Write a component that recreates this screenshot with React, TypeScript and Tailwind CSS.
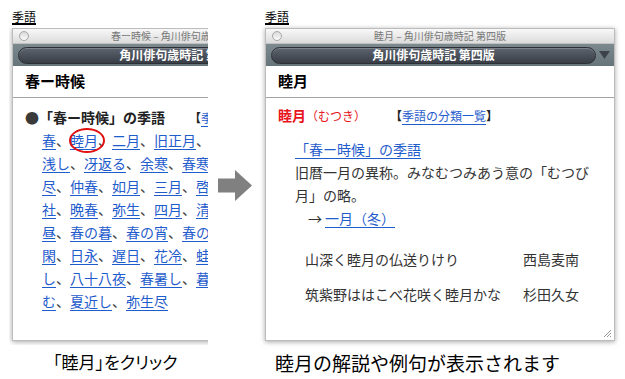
import type { ReactNode } from "react";

const kigoLines = [
  "春、睦月、二月、旧正月、立春、早春、春",
  "浅し、冴返る、余寒、春寒、遅春、二月",
  "尽、仲春、如月、三月、啓蟄、彼岸、春",
  "社、晩春、弥生、四月、清明、春日、春",
  "昼、春の暮、春の宵、春の夜、暖か、長",
  "閑、日永、遅日、花冷、蛙の目借時、遅",
  "し、八十八夜、春暑し、暮の春、春惜し",
  "む、夏近し、弥生尽",
];

const reigaku = [
  { ku: "山深く睦月の仏送りけり", author: "西島麦南" },
  { ku: "筑紫野ははこべ花咲く睦月かな", author: "杉田久女" },
];

const linkCls = "text-[#1f5ccc] underline decoration-1 underline-offset-[3px]";

const MacWindow = ({ title, header, children }: { title: string; header: string; children: ReactNode }) => {
  return (
    <div className="w-[350px] h-[313px] flex flex-col bg-white border border-[#bcbcbc] shadow-[0_1px_5px_rgba(0,0,0,0.35)]">
      {/* title bar */}
      <div className="h-[15px] flex items-center border-b border-[#c2c2c2] bg-gradient-to-b from-[#f8f8f8] to-[#dcdcdc]">
        <span className="ml-[6px] w-[10px] h-[10px] rounded-full border border-[#a8a8a8] bg-gradient-to-b from-[#d9d9d9] to-[#fbfbfb]" />
        <span className="flex-1 text-center text-[10px] leading-none text-[#777]">{title}</span>
        <span className="w-[16px]" />
      </div>
      {/* toolbar */}
      <div className="h-[22px] flex items-center gap-[3px] pl-[5px] pr-[4px] bg-gradient-to-b from-[#7c898e] to-[#66757a]">
        <div className="flex-1 h-[17px] rounded-full border border-[#2c3036] bg-gradient-to-b from-[#5d646e] to-[#393e47] shadow-[inset_0_1px_0_rgba(255,255,255,0.2)] flex items-center justify-center">
          <span className="text-[12px] leading-none font-bold text-white">角川俳句歳時記 第四版</span>
        </div>
        <svg width="11" height="8" viewBox="0 0 11 8">
          <polygon points="0,0 11,0 5.5,8" fill="#3e4349" />
        </svg>
      </div>
      {/* header */}
      <div className="h-[32px] flex items-center px-[12px] border-b border-[#a3a3a3] text-[15px] font-bold text-black">
        {header}
      </div>
      <div className="flex-1 flex flex-col">{children}</div>
    </div>
  );
};

const KigoLine = ({ line, row }: { line: string; row: number }) => {
  const parts = line.split("、");
  return (
    <div className="whitespace-nowrap">
      {parts.map((p, i) => (
        <span key={i}>
          {row === 0 && p === "睦月" ? (
            <span className="relative">
              <span className={linkCls}>{p}</span>
              <span className="absolute left-[-1px] top-[-2px] w-[36px] h-[25px] rounded-[50%] border-[2.5px] border-[#e01010]" />
            </span>
          ) : (
            <span className={linkCls}>{p}</span>
          )}
          {i < parts.length - 1 && <span className="text-[#444]">、</span>}
        </span>
      ))}
    </div>
  );
};

const KigoLabel = () => (
  <div className="h-[28px] pt-[10px] flex items-start">
    <span className="text-[12px] leading-[13px] text-black border-b-2 border-black">季語</span>
  </div>
);

export default function App() {
  return (
    <div className="w-[625px] h-[379px] bg-white overflow-hidden flex font-['Noto_Sans_CJK_JP','Noto_Sans',sans-serif] text-[#333]">
      {/* left: before click */}
      <div className="w-[208px] pl-[9px] flex flex-col">
        <div className="pl-[3px]">
          <KigoLabel />
        </div>
        <div className="w-[199px] pl-[3px] pb-[4px] overflow-hidden">
          <MacWindow title="春ー時候 – 角川俳句歳時記 第四版" header="春ー時候">
            <div className="pl-[12px] pt-[8px] text-[14px] leading-[23px]">
              <div className="flex whitespace-nowrap">
                <span className="text-[#3a3a3a]">●</span>
                <span className="font-bold text-[#222]">「春ー時候」の季語</span>
                <span className="ml-[24px] text-[12px]">
                  <span className="font-bold text-[#222]">【</span>
                  <span className={linkCls}>季語の分類一覧</span>】
                </span>
              </div>
              <div className="pl-[17px]">
                {kigoLines.map((l, i) => (
                  <KigoLine key={i} line={l} row={i} />
                ))}
              </div>
            </div>
          </MacWindow>
        </div>
        <div className="mt-[7px] ml-[44px] text-[17px] leading-[20px] text-black [font-feature-settings:'palt']">
          「睦月」をクリック
        </div>
      </div>

      {/* arrow */}
      <div className="w-[57px] pt-[170px] pl-[10px]">
        <svg width="34" height="31" viewBox="0 0 34 31">
          <polygon points="0,8.5 17,8.5 17,0 34,15.5 17,31 17,22.5 0,22.5" fill="#808080" />
        </svg>
      </div>

      {/* right: after click */}
      <div className="w-[360px] flex flex-col">
        <KigoLabel />
        <div className="pb-[4px]">
          <MacWindow title="睦月 – 角川俳句歳時記 第四版" header="睦月">
            <div className="pl-[12px] pt-[6px] text-[14px] leading-[23px] flex-1 flex flex-col">
              <div className="flex items-baseline whitespace-nowrap">
                <span className="font-bold text-[#e8141c]">睦月</span>
                <span className="text-[12px] text-[#e8141c]">（むつき）</span>
                <span className="ml-[24px] text-[12px] text-[#222]">
                  <span className="font-bold">【</span>
                  <span className={linkCls}>季語の分類一覧</span>
                  <span className="font-bold">】</span>
                </span>
              </div>
              <div className="mt-[11px] pl-[17px] w-[317px]">
                <div>
                  <span className={linkCls}>「春ー時候」の季語</span>
                </div>
                <p>旧暦一月の異称。みなむつみあう意の「むつび月」の略。</p>
                <div className="pl-[13px]">
                  →<span className={`ml-[3px] ${linkCls}`}>一月（冬）</span>
                </div>
              </div>
              <div className="mt-[18px] pl-[27px] flex flex-col gap-[12px]">
                {reigaku.map((r) => (
                  <div key={r.author} className="grid grid-cols-[218px_1fr] text-[#333]">
                    <span>{r.ku}</span>
                    <span>{r.author}</span>
                  </div>
                ))}
              </div>
              <div className="mt-auto self-end mr-[2px] mb-[2px]">
                <svg width="9" height="9" viewBox="0 0 9 9">
                  <path d="M8 1 L1 8 M8 4 L4 8 M8 7 L7 8" stroke="#9a9a9a" strokeWidth="1" />
                </svg>
              </div>
            </div>
          </MacWindow>
        </div>
        <div className="mt-[7px] ml-[10px] text-[19px] leading-[22px] text-black">
          睦月の解説や例句が表示されます
        </div>
      </div>
    </div>
  );
}
